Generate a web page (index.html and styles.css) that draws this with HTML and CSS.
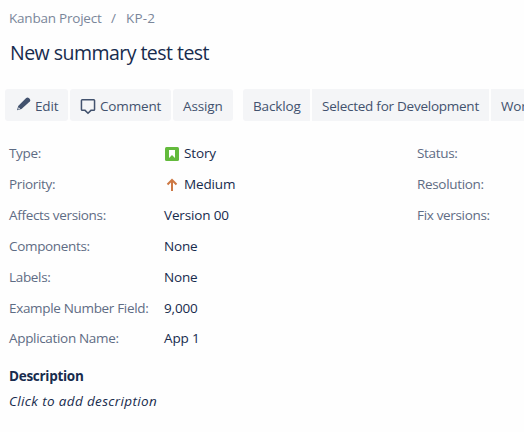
FILE: index.html
```html
<!DOCTYPE html>
<html lang="en">
<head>
<meta charset="utf-8">
<title>KP-2 New summary test test</title>
<link rel="stylesheet" href="styles.css">
</head>
<body>
<main class="issue">
  <nav class="breadcrumbs"><span class="project">Kanban Project</span><span class="slash">/</span><span class="key">KP-2</span></nav>
  <h1 class="title">New summary test test</h1>
  <div class="toolbar">
    <div class="group">
      <button class="button edit"><svg class="pencil" width="16" height="16" viewBox="0 0 16 16"><path d="M1 14.2 2.2 10 10.2 2q1.300-1.200 2.600 0l1 1q1.200 1.300 0 2.500L5.500 13Z"/><path class="tip" d="m2.600 11.300 1.500 1.500-1.900.6Z"/></svg><span>Edit</span></button>
      <button class="button comment"><svg class="bubble" width="16" height="17" viewBox="0 0 16 17"><path d="M2.250 1.750h11.500q.8 0 .8.8v9q0 .8-.8.8h-2.800L8 15.300l-2.950-2.950h-2.800q-.8 0-.8-.8v-9q0-.8.8-.8Z"/></svg><span>Comment</span></button>
      <button class="button assign"><span>Assign</span></button>
    </div>
    <div class="group">
      <button class="button backlog"><span>Backlog</span></button>
      <button class="button selected"><span>Selected for Development</span></button>
      <button class="button workflow"><span>Workflow</span></button>
    </div>
  </div>
  <div class="details">
    <dl class="fields">
      <dt>Type:</dt><dd><svg class="icon" width="14" height="14" viewBox="0 0 14 14"><rect width="14" height="14" rx="1.5" fill="#63ba3c"/><path d="M4 3h6v8L7 8.1 4 11Z" fill="#fff"/></svg><span>Story</span></dd>
      <dt>Priority:</dt><dd><svg class="icon" width="14" height="14" viewBox="0 0 14 14"><path d="M7 13V2.5M2.500 6.500 7 2l4.500 4.500" fill="none" stroke="#cd7844" stroke-width="2"/></svg><span>Medium</span></dd>
      <dt>Affects versions:</dt><dd><span>Version 00</span></dd>
      <dt>Components:</dt><dd><span>None</span></dd>
      <dt>Labels:</dt><dd><span>None</span></dd>
      <dt>Example Number Field:</dt><dd><span>9,000</span></dd>
      <dt>Application Name:</dt><dd><span>App 1</span></dd>
    </dl>
    <dl class="fields">
      <dt>Status:</dt><dt>Resolution:</dt><dt>Fix versions:</dt>
    </dl>
  </div>
  <section class="description">
    <h2>Description</h2>
    <p>Click to add description</p>
  </section>
</main>
</body>
</html>
```
FILE: styles.css
```css
* { box-sizing: border-box; }
html, body { height: 100%; }
body { margin: 0; overflow: hidden; background: #fefefe; color: #172b4d; font: 13.5px/20px "Open Sans", "Noto Sans", sans-serif; letter-spacing: -0.15px; }
.issue { padding: 8px 0 0 9px; height: 100%; overflow: hidden; }
.breadcrumbs { display: flex; height: 20px; color: #7a869a; }
.project { width: 92px; white-space: nowrap; letter-spacing: -0.22px; }
.slash { width: 25px; padding-left: 10px; }
.key { letter-spacing: 0.2px; }
.title { margin: 11px 0 0 1px; font-size: 19.5px; line-height: 28px; font-weight: 400; letter-spacing: -0.53px; }
.toolbar { display: flex; gap: 10px; width: 600px; margin: 22px 0 0 -4px; }
.group { display: flex; gap: 2px; }
.button { display: flex; align-items: center; height: 32px; padding: 2px 0 0 10px; border: 0; background: #f4f5f7; color: #42526e; font: inherit; letter-spacing: inherit; white-space: nowrap; }
.button:first-child { border-radius: 3px 0 0 3px; }
.group:first-child .button { border-radius: 3px; }
.edit { width: 63px; }
.comment { width: 101px; }
.assign { width: 60px; }
.backlog { width: 67px; }
.selected { width: 177px; letter-spacing: -0.25px; }
.workflow { width: 80px; }
.pencil { margin: -5px 3px 0 1px; fill: #42526e; }
.tip { fill: #f4f5f7; }
.bubble { margin: 0 4px 0 0; fill: none; stroke: #42526e; stroke-width: 1.5; }
.details { display: flex; margin-top: 17px; height: 216px; }
.fields { display: grid; grid-template-columns: 155px 253px; grid-template-rows: repeat(5, 31px) 30px 31px; margin: 0; line-height: 31px; }
.fields dt:nth-of-type(6), .fields dd:nth-of-type(6) { line-height: 31px; }
.fields + .fields { grid-template-columns: 100px; }
dt { color: #5e6c84; white-space: nowrap; letter-spacing: -0.33px; }
dd { display: flex; align-items: center; margin: 0; height: 31px; }
.icon { margin: 1px 5px 0 1px; }
.description { margin-top: 12px; }
.description h2 { margin: 0; font-size: 13.5px; line-height: 20px; letter-spacing: -0.28px; }
.description p { margin: 5px 0 0; font-style: italic; letter-spacing: 0.36px; }
```
